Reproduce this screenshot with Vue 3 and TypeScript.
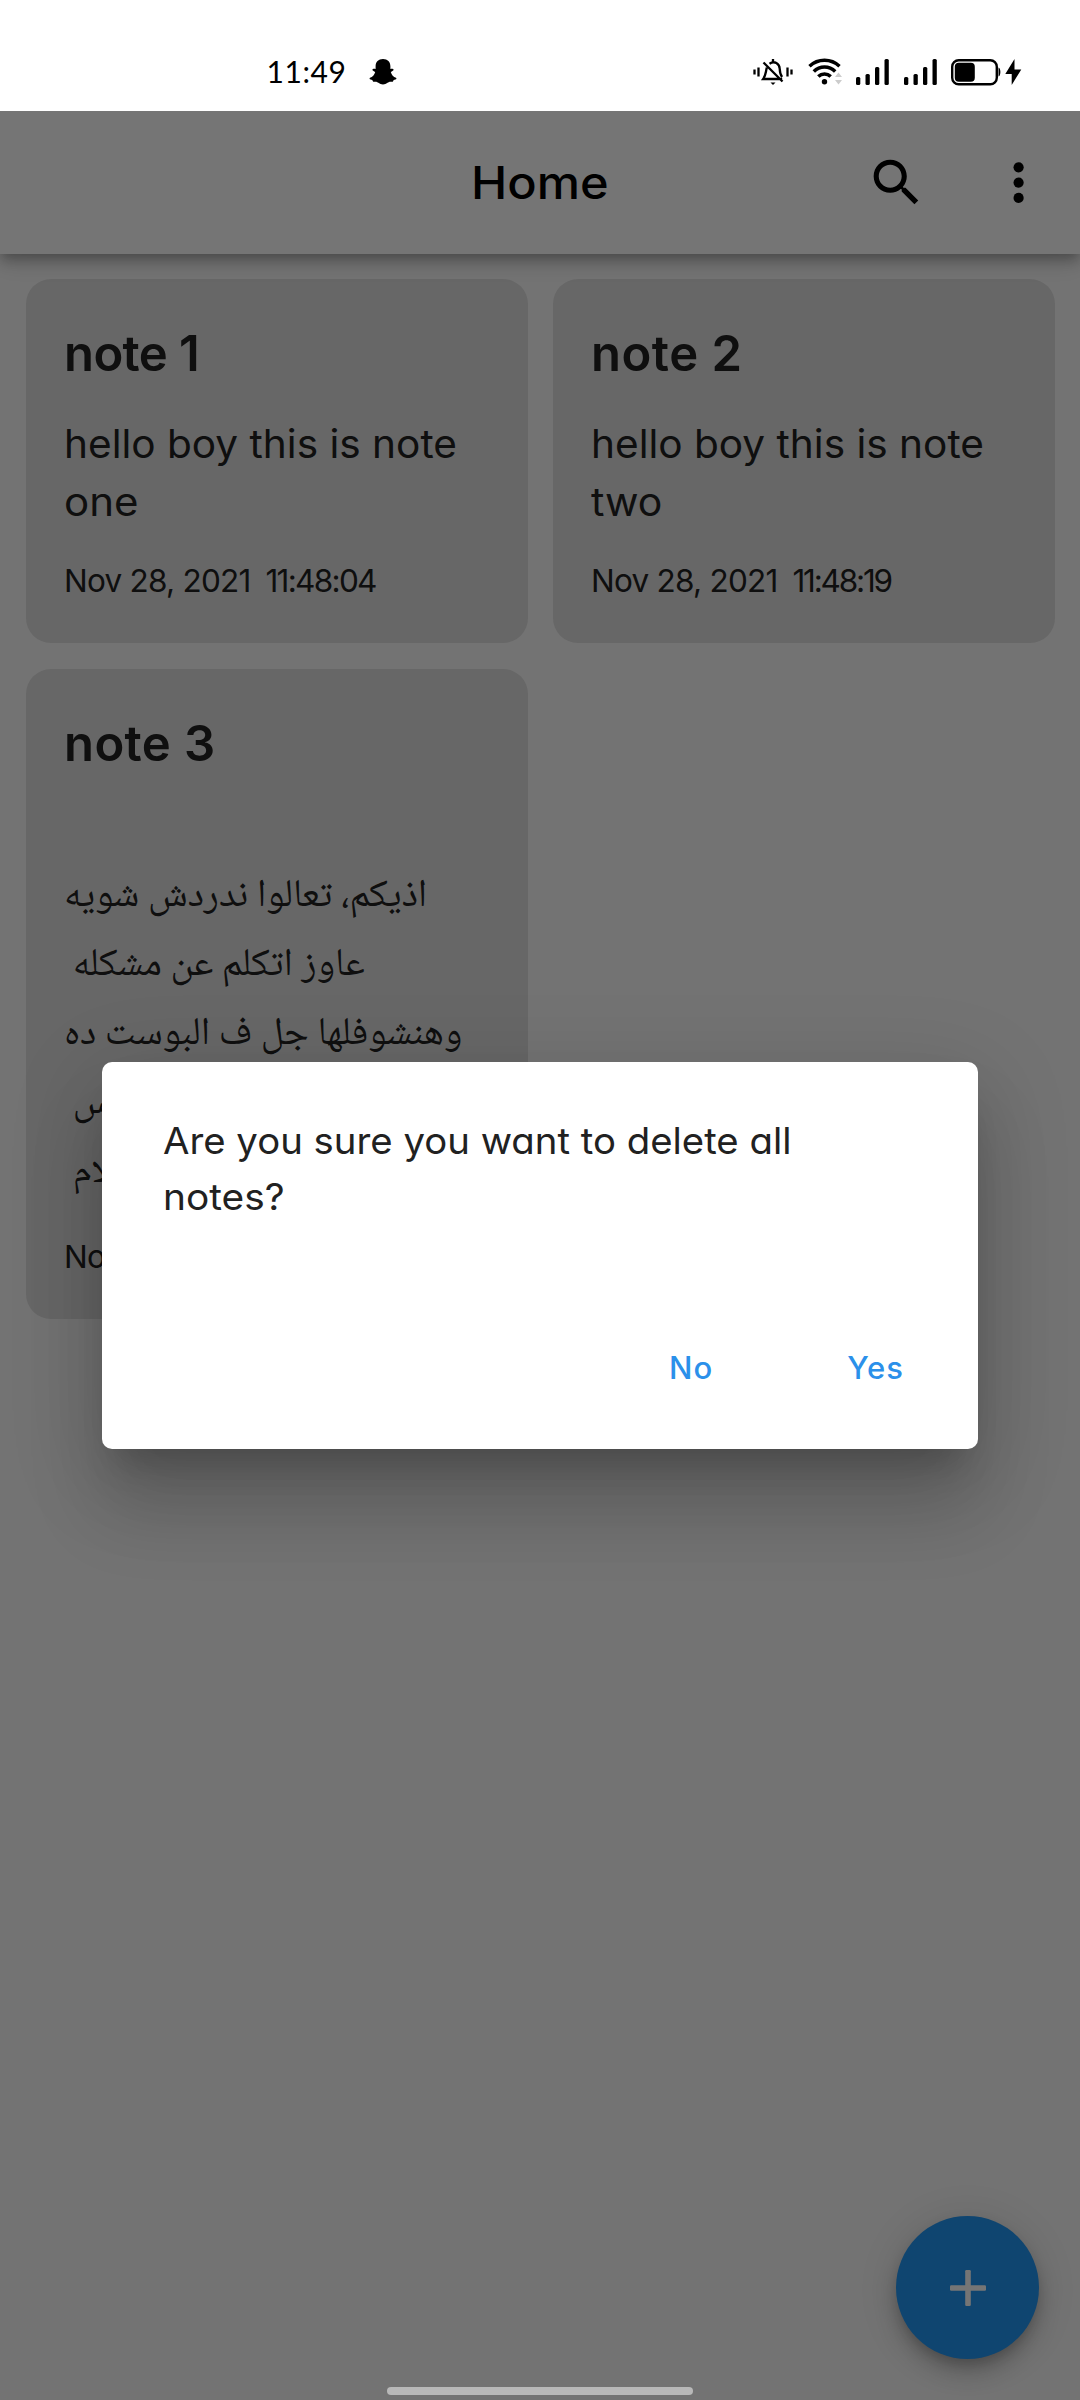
<script setup lang="ts">
interface Note {
  title: string
  spacing: string
  lines: { text: string; stretch?: number }[]
  rtl?: boolean
  date: string
  time: string
  timeSpacing: string
}

const notes: Note[] = [
  {
    title: 'note 1',
    spacing: '-0.6px',
    lines: [{ text: 'hello boy this is note', stretch: 1.04 }, { text: 'one', stretch: 1.077 }],
    date: 'Nov 28, 2021',
    time: '11:48:04',
    timeSpacing: '-1.7px',
  },
  {
    title: 'note 2',
    spacing: '0.5px',
    lines: [{ text: 'hello boy this is note', stretch: 1.04 }, { text: 'two', stretch: 1.05 }],
    date: 'Nov 28, 2021',
    time: '11:48:19',
    timeSpacing: '-2.2px',
  },
  {
    title: 'note 3',
    spacing: '0.4px',
    rtl: true,
    lines: [
      { text: 'اذيكم، تعالوا ندردش شويه' },
      { text: 'عاوز اتكلم عن مشكله\u00a0' },
      { text: 'وهنشوفلها جل ف البوست ده' },
      { text: 'بين الناس\u00a0' },
      { text: 'والسلام\u00a0' },
    ],
    date: 'Nov 28, 2021',
    time: '11:48:45',
    timeSpacing: '-1.7px',
  },
]
</script>

<template>
  <div class="phone">
    <header class="status">
      <span class="clock">11:49</span>
      <svg class="ghost" width="28" height="28" viewBox="0 0 28 28">
        <path
          d="M14 1c4.600 0 7.400 3 7.400 7.300v2.600c1-.3 2.800-.5 3.200.5.3 1-1.500 1.800-2.800 2.500.8 3 2.600 5 5.200 5.900.8.400.5 1.400-.6 1.800-1.300.4-2 .5-2.300 1.700-.2.700-1 .600-2.300.500-2.700-.2-4 2.700-7.800 2.700s-5.100-2.900-7.800-2.700c-1.300.1-2.100.2-2.300-.5-.3-1.200-1-1.300-2.300-1.700-1.100-.4-1.400-1.400-.6-1.800 2.600-.9 4.400-2.900 5.200-5.900-1.300-.7-3.100-1.500-2.800-2.500.4-1 2.200-.8 3.200-.5V8.300C6.600 4 9.400 1 14 1z"
        />
      </svg>
      <div class="system">
        <svg class="bell" width="40" height="28" viewBox="0 0 40 28" fill="none" stroke="#000" stroke-width="2.300">
          <path d="M1.500 11.500v5M5.500 9.500v9M34.500 9.500v9M38.500 11.500v5" />
          <path d="M13.800 9.500c-1.300 5.500-1 8-3.600 11.500h19M16.500 5.700c5-3.500 10 0 10.200 5 .2 4 .8 6.300 2.400 8.300M20 1v3.500M10.500 4.500l19 19" />
          <path d="M17.500 24.500h5l-2.500 2.500z" fill="#000" stroke="none" />
        </svg>
        <svg class="wifi" width="35" height="28" viewBox="0 0 35 28" fill="none" stroke="#000" stroke-width="3.500">
          <path d="M1.500 8.300c8.500-8 21.500-8 30 0M5.800 13.600c6-6 15.400-6 21.400 0M10.300 18.600c3.500-3.400 8.900-3.400 12.400 0" />
          <circle cx="16.500" cy="23.700" r="2.700" fill="#000" stroke="none" />
          <path d="M27 19l3.500-4.500L34 19zM27 22l3.500 4.500L34 22z" fill="#ccc" stroke="none" />
        </svg>
        <svg v-for="n in 2" :key="n" class="signal" width="33" height="28" viewBox="0 0 33 28">
          <rect x="0" y="19" width="4.300" height="8" rx="1.500" />
          <rect x="9.500" y="16" width="4.300" height="11" rx="1.500" />
          <rect x="19" y="9" width="4.300" height="18" rx="1.500" />
          <rect x="28.500" y="1" width="4.300" height="26" rx="1.500" />
        </svg>
        <svg class="battery" width="51" height="28" viewBox="0 0 51 28">
          <rect x="1.200" y="2.200" width="44.600" height="24" rx="6.500" fill="none" stroke="#000" stroke-width="2.400" />
          <rect x="3.800" y="4.700" width="20" height="19" rx="4" />
          <path d="M47.500 9.500c2.500.5 2.500 8.500 0 9z" />
        </svg>
        <svg class="bolt" width="17" height="28" viewBox="0 0 17 28"><path d="M9.500 1 .3 16h6.400v11L16.300 11.500H9.500z" /></svg>
      </div>
    </header>

    <div class="app">
      <div class="appbar">
        <h1>Home</h1>
        <svg class="search" width="61.200" height="61.200" viewBox="0 0 24 24">
          <path
            d="M15.500 14h-.79l-.28-.27C15.410 12.590 16 11.110 16 9.500 16 5.910 13.090 3 9.500 3S3 5.910 3 9.500 5.910 16 9.500 16c1.610 0 3.090-.59 4.230-1.570l.27.28v.79l5 4.990L20.490 19l-4.990-5zm-6 0C7.010 14 5 11.990 5 9.500S7.010 5 9.500 5 14 7.010 14 9.500 11.990 14 9.500 14z"
          />
        </svg>
        <svg class="more" width="61.200" height="61.200" viewBox="0 0 24 24">
          <circle cx="12" cy="6" r="2" />
          <circle cx="12" cy="12" r="2" />
          <circle cx="12" cy="18" r="2" />
        </svg>
      </div>

      <main class="grid">
        <article v-for="note in notes" :key="note.title" class="note">
          <h2 :style="{ letterSpacing: note.spacing }">{{ note.title }}</h2>
          <div class="body" :class="{ rtl: note.rtl }">
            <p
              v-for="line in note.lines"
              :key="line.text"
              :style="line.stretch ? { transform: `scaleX(${line.stretch})` } : undefined"
            >
              {{ line.text }}
            </p>
          </div>
          <div class="stamp">
            <span class="date">{{ note.date }}</span>
            <span :style="{ letterSpacing: note.timeSpacing }">{{ note.time }}</span>
          </div>
        </article>
      </main>

      <button class="fab">
        <svg width="36" height="36" viewBox="0 0 36 36" fill="#fff">
          <rect x="0" y="15.200" width="36" height="5.600" rx="1.200" />
          <rect x="15.200" y="0" width="5.600" height="36" rx="1.200" />
        </svg>
      </button>

      <div class="scrim">
        <section class="dialog">
          <p class="first">Are you sure you want to delete all</p>
          <p class="second">notes?</p>
          <div class="actions">
            <button class="no">No</button>
            <button class="yes">Yes</button>
          </div>
        </section>
        <div class="pill"></div>
      </div>
    </div>
  </div>
</template>

<style>
body {
  margin: 0;
}
</style>

<style scoped>
.phone {
  width: 1080px;
  height: 2400px;
  display: flex;
  flex-direction: column;
  overflow: hidden;
  background: #fff;
  font-family: Inter, 'Liberation Sans', sans-serif;
  font-feature-settings: 'cv11';
  color: #212121;
}
h1,
h2,
p {
  margin: 0;
  white-space: nowrap;
  transform-origin: left center;
}
button {
  border: 0;
  padding: 0;
  background: none;
  font: inherit;
}
svg {
  display: block;
  flex: none;
}
.status {
  flex: none;
  height: 111px;
  box-sizing: border-box;
  padding: 58px 58px 0 266.500px;
  display: flex;
  align-items: flex-start;
  color: #000;
}
.clock {
  width: 102.500px;
  font: 30px/27px Lato, sans-serif;
  letter-spacing: 0.6px;
}
.system {
  margin-left: auto;
  display: flex;
}
.wifi {
  margin-left: 15px;
}
.signal {
  margin-left: 13px;
}
.signal + .signal {
  margin-left: 15px;
}
.battery {
  margin-left: 14px;
}
.bolt {
  margin-left: 3px;
}
.app {
  position: relative;
  flex: 1;
  display: flex;
  flex-direction: column;
  overflow: hidden;
  background: #fafafa;
}
.appbar {
  position: relative;
  flex: none;
  height: 143px;
  box-sizing: border-box;
  padding: 0 31px 0 471px;
  display: flex;
  align-items: center;
  background: #fff;
  color: #000;
  box-shadow: 0 5px 10px -3px rgba(0, 0, 0, 0.2), 0 10px 13px rgba(0, 0, 0, 0.14), 0 3px 26px rgba(0, 0, 0, 0.12);
}
.appbar h1 {
  font-size: 45px;
  font-weight: 500;
  line-height: 66px;
  transform: scaleX(1.083);
}
.search {
  margin-left: auto;
}
.more {
  margin-left: 61px;
}
.grid {
  display: grid;
  grid-template-columns: 501.500px 501.500px;
  align-items: start;
  gap: 26px 25.500px;
  padding: 25px 26px;
}
.note {
  box-sizing: border-box;
  padding: 40px 38px 38px;
  border-radius: 25px;
  background: #e0e0e0;
}
.note h2 {
  font-size: 49px;
  font-weight: 600;
  line-height: 70px;
}
.body {
  margin: 26px 0 26.500px;
  font-size: 39px;
  line-height: 57.500px;
}
.body.rtl {
  padding-top: 58px;
  margin-bottom: 25px;
  direction: rtl;
  text-align: left;
  font: 39.200px/69px 'Noto Naskh Arabic', 'DejaVu Sans', sans-serif;
}
.stamp {
  display: flex;
  font-size: 31.500px;
  line-height: 48px;
}
.date {
  width: 201.500px;
  letter-spacing: -0.750px;
  white-space: nowrap;
}
.fab {
  position: absolute;
  right: 41px;
  bottom: 41px;
  width: 143px;
  height: 143px;
  border-radius: 50%;
  display: grid;
  place-items: center;
  background: #2196f3;
  box-shadow: 0 8px 13px -3px rgba(0, 0, 0, 0.2), 0 15px 24px rgba(0, 0, 0, 0.14), 0 3px 40px rgba(0, 0, 0, 0.12);
}
.scrim {
  position: absolute;
  inset: 0;
  background: rgba(0, 0, 0, 0.54);
}
.dialog {
  box-sizing: border-box;
  width: 876px;
  height: 387.500px;
  margin: 950.500px auto 0;
  padding: 51px 74px 0 60.500px;
  border-radius: 10px;
  background: #fff;
  font-size: 37px;
  line-height: 56px;
  box-shadow: 0 28px 34px -18px rgba(0, 0, 0, 0.2), 0 61px 76px 2px rgba(0, 0, 0, 0.14), 0 23px 90px 10px rgba(0, 0, 0, 0.12);
}
.first {
  transform: scaleX(1.036);
}
.second {
  transform: scaleX(1.05);
}
.actions {
  margin-top: 119px;
  display: flex;
  justify-content: flex-end;
  gap: 134px;
  font-size: 31px;
  font-weight: 500;
  line-height: 48px;
}
.actions button {
  color: #2b90ea;
}
.no {
  letter-spacing: 1px;
}
.yes {
  letter-spacing: 1px;
}
.pill {
  width: 306px;
  height: 8px;
  margin: 938px auto 0;
  border-radius: 4px;
  background: #b8b8b8;
}
</style>
